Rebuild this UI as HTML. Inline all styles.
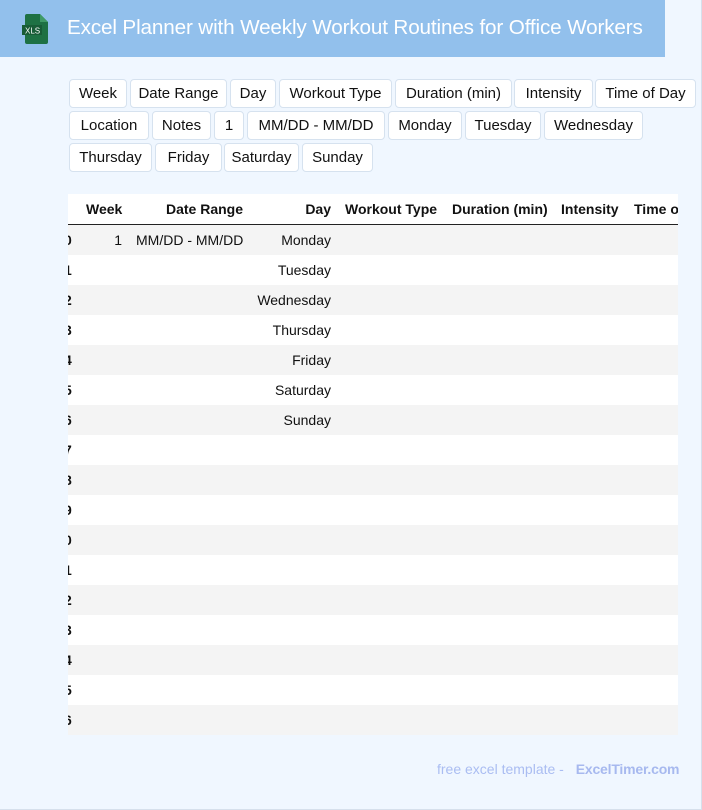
<!DOCTYPE html>
<html><head><meta charset="utf-8"><style>
*{margin:0;padding:0;box-sizing:border-box}
body{width:702px;height:810px;background:#eef5fd;font-family:"Liberation Sans",Arial,sans-serif;position:relative;overflow:hidden}
.frame{position:absolute;left:0;top:0;width:702px;height:810px;border-right:1px solid #d6e0ec;border-bottom:1px solid #d6e0ec;background:#f0f7ff}
.hdr{position:absolute;left:0;top:0;width:665px;height:57px;background:#92c0ec}
.hdr h1{position:absolute;left:67px;top:16px;font-size:20.7px;font-weight:normal;color:#fff;white-space:nowrap;letter-spacing:-0.15px}
.b{position:absolute;height:29px;border:1px solid #d6e2ef;border-radius:4px;background:#fff;font-size:15px;line-height:27px;text-align:center;color:#111;white-space:nowrap}
.tbl{position:absolute;left:68px;top:194px;width:610px;height:541px;background:#fff;overflow:hidden;font-size:14px;color:#111}
.r{position:absolute;left:0;width:610px;height:30px}
.r.s{background:#f4f4f4}
.c{position:absolute;top:0;line-height:30px;white-space:nowrap}
.rt{text-align:right}
.h .c{font-weight:bold}
.line{position:absolute;left:0;top:30px;width:610px;height:1px;background:#222}
.foot{position:absolute;top:761px;left:437px;font-size:14px;color:#aabdf2}
.foot b{color:#a7b9ef;margin-left:8px;letter-spacing:-0.2px}
</style></head><body>
<div class="frame"></div>
<div class="hdr">
<svg style="position:absolute;left:22px;top:13px" width="28" height="32" viewBox="0 0 28 32"><path d="M5 1h13l8 8v20a2 2 0 0 1-2 2H5a2 2 0 0 1-2-2V3a2 2 0 0 1 2-2z" fill="#1e7144"/><path d="M18 1v8h8z" fill="#3f9a66"/><rect x="0" y="12" width="20" height="10" fill="#185c37"/><text x="3" y="20.5" font-size="8" fill="#fff" font-family="Liberation Sans">XLS</text></svg>
<h1>Excel Planner with Weekly Workout Routines for Office Workers</h1>
</div>
<div class="b" style="left:69px;top:79px;width:58px">Week</div>
<div class="b" style="left:130px;top:79px;width:97px">Date Range</div>
<div class="b" style="left:230px;top:79px;width:46px">Day</div>
<div class="b" style="left:279px;top:79px;width:113px">Workout Type</div>
<div class="b" style="left:395px;top:79px;width:117px">Duration (min)</div>
<div class="b" style="left:514px;top:79px;width:79px">Intensity</div>
<div class="b" style="left:595px;top:79px;width:101px">Time of Day</div>
<div class="b" style="left:69px;top:111px;width:80px">Location</div>
<div class="b" style="left:152px;top:111px;width:59px">Notes</div>
<div class="b" style="left:214px;top:111px;width:30px">1</div>
<div class="b" style="left:247px;top:111px;width:138px">MM/DD - MM/DD</div>
<div class="b" style="left:388px;top:111px;width:74px">Monday</div>
<div class="b" style="left:465px;top:111px;width:76px">Tuesday</div>
<div class="b" style="left:544px;top:111px;width:99px">Wednesday</div>
<div class="b" style="left:69px;top:143px;width:83px">Thursday</div>
<div class="b" style="left:155px;top:143px;width:67px">Friday</div>
<div class="b" style="left:224px;top:143px;width:75px">Saturday</div>
<div class="b" style="left:302px;top:143px;width:71px">Sunday</div>
<div class="tbl">
<div class="r h"><span class="c" style="left:18px">Week</span><span class="c" style="left:98px">Date Range</span><span class="c rt" style="right:347px">Day</span><span class="c" style="left:277px">Workout Type</span><span class="c" style="left:384px">Duration (min)</span><span class="c" style="left:493px">Intensity</span><span class="c" style="left:566px">Time of Day</span><div class="line"></div></div>
<div id="rows"></div>
</div>
<div class="foot">free excel template - <b>ExcelTimer.com</b></div>
<script>
var d=["Monday","Tuesday","Wednesday","Thursday","Friday","Saturday","Sunday"],h="";
for(var i=0;i<17;i++){var t=31+i*30;h+='<div class="r'+(i%2==0?' s':'')+'" style="top:'+t+'px"><span class="c" style="left:-4px;font-weight:bold">'+(i%10)+'</span>';
if(i==0)h+='<span class="c rt" style="right:556px">1</span><span class="c" style="left:68px">MM/DD - MM/DD</span>';
if(i<7)h+='<span class="c rt" style="right:347px">'+d[i]+'</span>';h+='</div>';}
document.getElementById("rows").innerHTML=h;
</script>
</body></html>
